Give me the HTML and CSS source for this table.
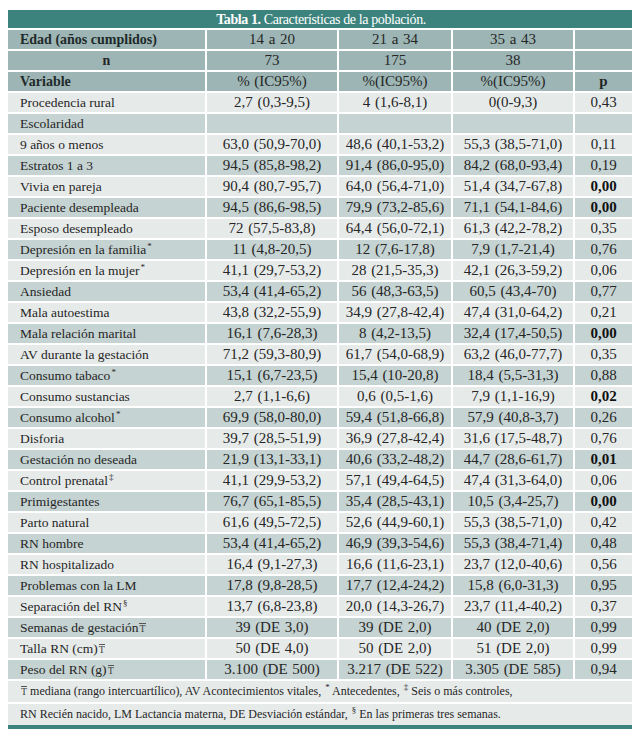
FILE: index.html
```html
<!DOCTYPE html>
<html lang="es">
<head>
<meta charset="utf-8">
<title>Tabla 1</title>
<link rel="stylesheet" href="styles.css">
</head>
<body>
<table class="tbl">
  <colgroup>
    <col class="c1"><col class="c2"><col class="c3"><col class="c4"><col class="c5">
  </colgroup>
  <thead>
    <tr class="title"><th colspan="5"><b>Tabla 1.</b> Características de la población.</th></tr>
    <tr class="hd"><th class="lbl">Edad (años cumplidos)</th><td>14 a 20</td><td>21 a 34</td><td>35 a 43</td><td></td></tr>
    <tr class="hd"><th class="ctr">n</th><td>73</td><td>175</td><td>38</td><td></td></tr>
    <tr class="hd"><th class="lbl">Variable</th><td>% (IC95%)</td><td>%(IC95%)</td><td>%(IC95%)</td><td class="pb">p</td></tr>
  </thead>
  <tbody>
    <tr><th>Procedencia rural</th><td>2,7 (0,3-9,5)</td><td>4 (1,6-8,1)</td><td>0(0-9,3)</td><td>0,43</td></tr>
    <tr><th>Escolaridad</th><td></td><td></td><td></td><td></td></tr>
    <tr><th>9 años o menos</th><td>63,0 (50,9-70,0)</td><td>48,6 (40,1-53,2)</td><td>55,3 (38,5-71,0)</td><td>0,11</td></tr>
    <tr><th>Estratos 1 a 3</th><td>94,5 (85,8-98,2)</td><td>91,4 (86,0-95,0)</td><td>84,2 (68,0-93,4)</td><td>0,19</td></tr>
    <tr><th>Vivia en pareja</th><td>90,4 (80,7-95,7)</td><td>64,0 (56,4-71,0)</td><td>51,4 (34,7-67,8)</td><td class="b">0,00</td></tr>
    <tr><th>Paciente desempleada</th><td>94,5 (86,6-98,5)</td><td>79,9 (73,2-85,6)</td><td>71,1 (54,1-84,6)</td><td class="b">0,00</td></tr>
    <tr><th>Esposo desempleado</th><td>72 (57,5-83,8)</td><td>64,4 (56,0-72,1)</td><td>61,3 (42,2-78,2)</td><td>0,35</td></tr>
    <tr><th>Depresión en la familia<sup>*</sup></th><td>11 (4,8-20,5)</td><td>12 (7,6-17,8)</td><td>7,9 (1,7-21,4)</td><td>0,76</td></tr>
    <tr><th>Depresión en la mujer<sup>*</sup></th><td>41,1 (29,7-53,2)</td><td>28 (21,5-35,3)</td><td>42,1 (26,3-59,2)</td><td>0,06</td></tr>
    <tr><th>Ansiedad</th><td>53,4 (41,4-65,2)</td><td>56 (48,3-63,5)</td><td>60,5 (43,4-70)</td><td>0,77</td></tr>
    <tr><th>Mala autoestima</th><td>43,8 (32,2-55,9)</td><td>34,9 (27,8-42,4)</td><td>47,4 (31,0-64,2)</td><td>0,21</td></tr>
    <tr><th>Mala relación marital</th><td>16,1 (7,6-28,3)</td><td>8 (4,2-13,5)</td><td>32,4 (17,4-50,5)</td><td class="b">0,00</td></tr>
    <tr><th>AV durante la gestación</th><td>71,2 (59,3-80,9)</td><td>61,7 (54,0-68,9)</td><td>63,2 (46,0-77,7)</td><td>0,35</td></tr>
    <tr><th>Consumo tabaco<sup>*</sup></th><td>15,1 (6,7-23,5)</td><td>15,4 (10-20,8)</td><td>18,4 (5,5-31,3)</td><td>0,88</td></tr>
    <tr><th>Consumo sustancias</th><td>2,7 (1,1-6,6)</td><td>0,6 (0,5-1,6)</td><td>7,9 (1,1-16,9)</td><td class="b">0,02</td></tr>
    <tr><th>Consumo alcohol<sup>*</sup></th><td>69,9 (58,0-80,0)</td><td>59,4 (51,8-66,8)</td><td>57,9 (40,8-3,7)</td><td>0,26</td></tr>
    <tr><th>Disforia</th><td>39,7 (28,5-51,9)</td><td>36,9 (27,8-42,4)</td><td>31,6 (17,5-48,7)</td><td>0,76</td></tr>
    <tr><th>Gestación no deseada</th><td>21,9 (13,1-33,1)</td><td>40,6 (33,2-48,2)</td><td>44,7 (28,6-61,7)</td><td class="b">0,01</td></tr>
    <tr><th>Control prenatal<sup>‡</sup></th><td>41,1 (29,9-53,2)</td><td>57,1 (49,4-64,5)</td><td>47,4 (31,3-64,0)</td><td>0,06</td></tr>
    <tr><th>Primigestantes</th><td>76,7 (65,1-85,5)</td><td>35,4 (28,5-43,1)</td><td>10,5 (3,4-25,7)</td><td class="b">0,00</td></tr>
    <tr><th>Parto natural</th><td>61,6 (49,5-72,5)</td><td>52,6 (44,9-60,1)</td><td>55,3 (38,5-71,0)</td><td>0,42</td></tr>
    <tr><th>RN hombre</th><td>53,4 (41,4-65,2)</td><td>46,9 (39,3-54,6)</td><td>55,3 (38,4-71,4)</td><td>0,48</td></tr>
    <tr><th>RN hospitalizado</th><td>16,4 (9,1-27,3)</td><td>16,6 (11,6-23,1)</td><td>23,7 (12,0-40,6)</td><td>0,56</td></tr>
    <tr><th>Problemas con la LM</th><td>17,8 (9,8-28,5)</td><td>17,7 (12,4-24,2)</td><td>15,8 (6,0-31,3)</td><td>0,95</td></tr>
    <tr><th>Separación del RN<sup>§</sup></th><td>13,7 (6,8-23,8)</td><td>20,0 (14,3-26,7)</td><td>23,7 (11,4-40,2)</td><td>0,37</td></tr>
    <tr><th>Semanas de gestación<span class="med">T</span></th><td>39 (DE 3,0)</td><td>39 (DE 2,0)</td><td>40 (DE 2,0)</td><td>0,99</td></tr>
    <tr><th>Talla RN (cm)<span class="med">T</span></th><td>50 (DE 4,0)</td><td>50 (DE 2,0)</td><td>51 (DE 2,0)</td><td>0,99</td></tr>
    <tr><th>Peso del RN (g)<span class="med">T</span></th><td>3.100 (DE 500)</td><td>3.217 (DE 522)</td><td>3.305 (DE 585)</td><td>0,94</td></tr>
  </tbody>
  <tfoot>
    <tr><td colspan="5"><span class="med">T</span> mediana (rango intercuartílico), AV Acontecimientos vitales, <sup>*</sup> Antecedentes, <sup>‡</sup> Seis o más controles,</td></tr>
    <tr><td colspan="5">RN Recién nacido, LM Lactancia materna, DE Desviación estándar, <sup>§</sup> En las primeras tres semanas.</td></tr>
  </tfoot>
</table>
</body>
</html>
```
FILE: styles.css
```css
html, body {
  margin: 0;
  padding: 0;
  background: #ffffff;
}
body {
  padding: 10px 0 0 8px;
  font-family: "Liberation Serif", "DejaVu Serif", serif;
  color: #262626;
}
.tbl {
  width: 624px;
  border-collapse: collapse;
  table-layout: fixed;
  font-size: 13.5px;
  border-bottom: 4px solid #3d837d;
}
.c1 { width: 198px; }
.c2 { width: 132px; }
.c3 { width: 114px; }
.c4 { width: 122px; }
.c5 { width: 58px; }
.tbl th, .tbl td {
  height: 19px;
  padding: 0 2px;
  border: 2px solid #ffffff;
  text-align: center;
  vertical-align: middle;
  line-height: 17px;
  white-space: nowrap;
  font-weight: normal;
}
.tbl td {
  font-size: 15px;
  word-spacing: 1px;
}
.tbl tr > *:first-child { border-left: none; }
.tbl tr > *:last-child { border-right: none; }
.tbl tbody th {
  text-align: left;
  padding-left: 12px;
}
.tbl .title th {
  background: #3d837d;
  color: #ffffff;
  height: 18px;
  border-top: none;
  font-size: 14px;
  letter-spacing: -0.4px;
  padding-left: 4px;
}
.tbl .title b { font-weight: bold; }
.tbl .hd > * {
  background: #9db6b5;
}
.tbl .hd th {
  font-size: 14px;
}
.tbl .hd th.lbl {
  text-align: left;
  padding-left: 12px;
  font-weight: bold;
  color: #1f2a2a;
}
.tbl .hd th.ctr { font-weight: bold; }
.tbl .hd .pb { font-weight: bold; }
.tbl tbody tr:nth-child(odd) > * { background: #e6ebea; }
.tbl tbody tr:nth-child(even) > * { background: #c5d3d2; }
.tbl .b { font-weight: bold; color: #111; }
.tbl sup {
  font-size: 9px;
  line-height: 0;
  vertical-align: 5px;
  margin-left: 1px;
}
.med {
  display: inline-block;
  font-size: 10px;
  line-height: 9px;
  border-top: 1px solid #555;
  margin-left: 1px;
  color: #444;
}
.tbl tfoot td {
  background: #e6ebea;
  text-align: left;
  padding-left: 12px;
  height: 21px;
  font-size: 12px;
  word-spacing: 0;
}
```
